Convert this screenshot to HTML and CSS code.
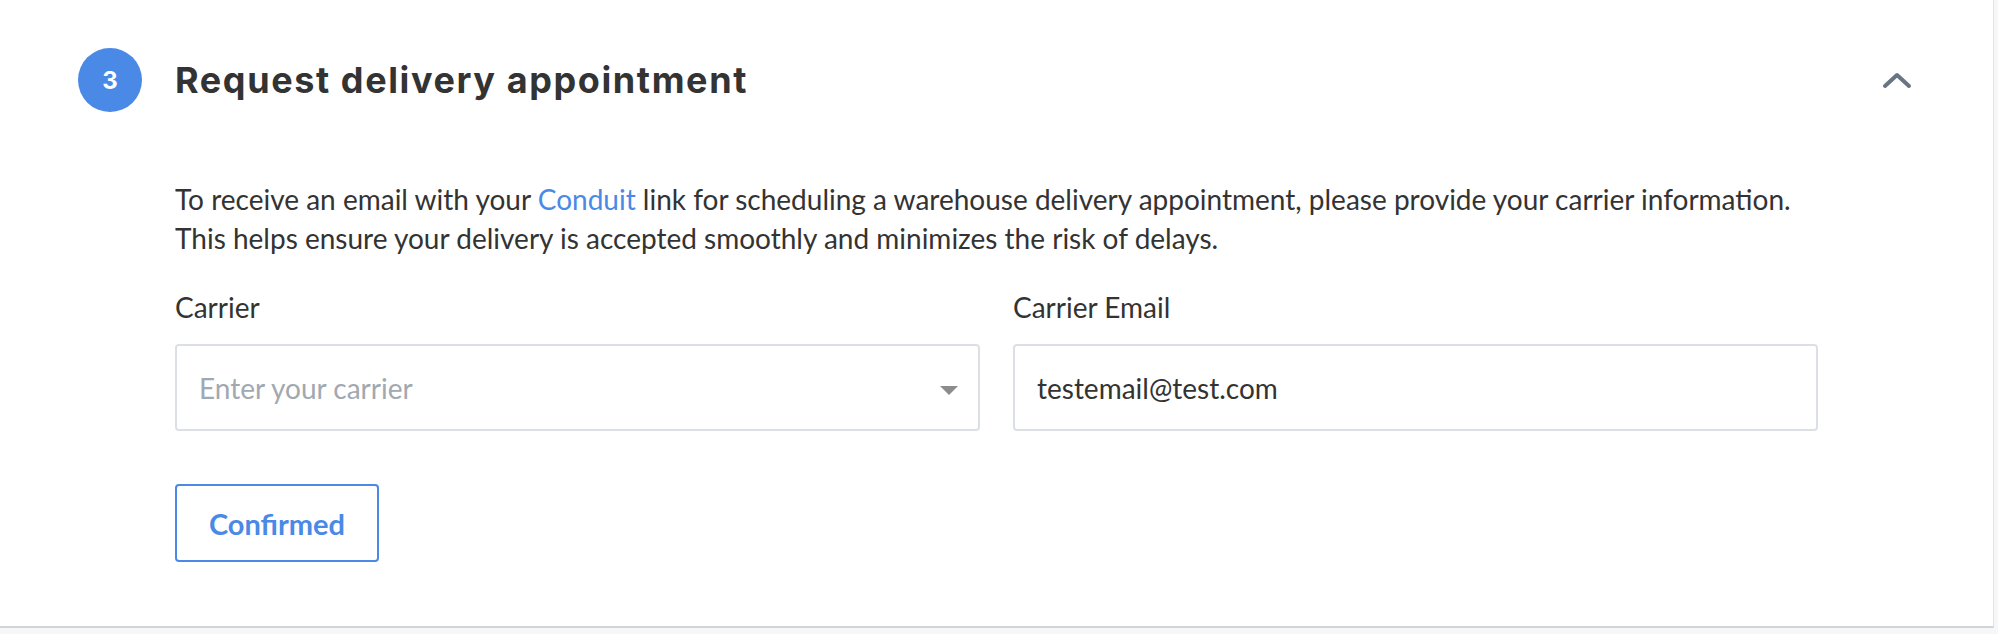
FILE: index.html
```html
<!DOCTYPE html>
<html lang="en">
<head>
  <meta charset="UTF-8">
  <title>Request delivery appointment</title>
  <link rel="stylesheet" href="styles.css">
</head>
<body>

<section class="step-card">
  <div class="step-header">
    <span class="step-number">3</span>
    <h2 class="step-title">Request delivery appointment</h2>
    <button class="collapse-btn" aria-label="Collapse">
      <svg width="30" height="18" viewBox="0 0 30 18">
        <path d="M3 15 L15 4 L27 15" fill="none" stroke="#6a7583" stroke-width="4" stroke-linecap="round" stroke-linejoin="round"/>
      </svg>
    </button>
  </div>

  <div class="step-body">
    <p class="description">
      To receive an email with your <a href="#">Conduit</a> link for scheduling a warehouse delivery appointment, please provide your carrier information.<br>
      This helps ensure your delivery is accepted smoothly and minimizes the risk of delays.
    </p>

    <div class="fields">
      <div class="field">
        <label for="carrier">Carrier</label>
        <div class="select-box">
          <input type="text" id="carrier" placeholder="Enter your carrier">
          <span class="caret"></span>
        </div>
      </div>
      <div class="field">
        <label for="carrierEmail">Carrier Email</label>
        <div class="select-box">
          <input type="email" id="carrierEmail" value="testemail@test.com">
        </div>
      </div>
    </div>

    <button class="confirm-btn">Confirmed</button>
  </div>
</section>

</body>
</html>
```

FILE: styles.css
```css
body {
  margin: 0;
  background: #f6f7f8;
  font-family: "Lato", sans-serif;
  color: #333;
}
.step-card {
  width: 1994px;
  height: 628px;
  box-sizing: border-box;
  background: #fff;
  border-right: 1px solid #e1e3e6;
  border-bottom: 2px solid #d0d4d8;
}
.step-header {
  display: flex;
  align-items: center;
  height: 160px;
  padding: 0 81px 0 78px;
}
.step-number {
  width: 64px;
  height: 64px;
  border-radius: 50%;
  background: #4a89e6;
  color: #fff;
  font-family: "Inter", sans-serif;
  font-weight: 700;
  font-size: 24px;
  display: flex;
  align-items: center;
  justify-content: center;
  flex-shrink: 0;
}
.step-title {
  flex: 1;
  margin: 0 0 0 33px;
  font-family: "Inter", sans-serif;
  font-weight: 700;
  font-size: 36px;
  letter-spacing: 1.6px;
  color: #333;
}
.collapse-btn {
  background: none;
  border: none;
  padding: 0;
  cursor: pointer;
  display: flex;
}
.step-body {
  padding: 20px 0 0 175px;
}
.description {
  margin: 0;
  font-size: 28px;
  line-height: 39px;
  color: #333;
}
.description a {
  color: #4a89e6;
  text-decoration: none;
}
.fields {
  display: flex;
  gap: 33px;
  margin-top: 33px;
}
.field {
  width: 805px;
}
.field label {
  display: block;
  font-size: 28px;
  line-height: 32px;
  margin-bottom: 21px;
}
.select-box {
  position: relative;
  height: 87px;
  box-sizing: border-box;
  border: 2px solid #dce0e5;
  border-radius: 4px;
  display: flex;
  align-items: center;
}
.select-box input {
  border: none;
  outline: none;
  width: 100%;
  padding: 0 22px;
  font-family: "Lato", sans-serif;
  font-size: 28px;
  color: #333;
  background: transparent;
}
.select-box input::placeholder {
  color: #a1a8b1;
}
.caret {
  position: absolute;
  right: 20px;
  top: 40px;
  width: 0;
  height: 0;
  border-left: 9px solid transparent;
  border-right: 9px solid transparent;
  border-top: 9px solid #8c8c8c;
}
.confirm-btn {
  margin-top: 53px;
  width: 204px;
  height: 78px;
  background: #fff;
  border: 2px solid #4a89e6;
  border-radius: 4px;
  color: #4a89e6;
  font-family: "Lato", sans-serif;
  font-weight: 700;
  font-size: 29px;
  cursor: pointer;
}
```
